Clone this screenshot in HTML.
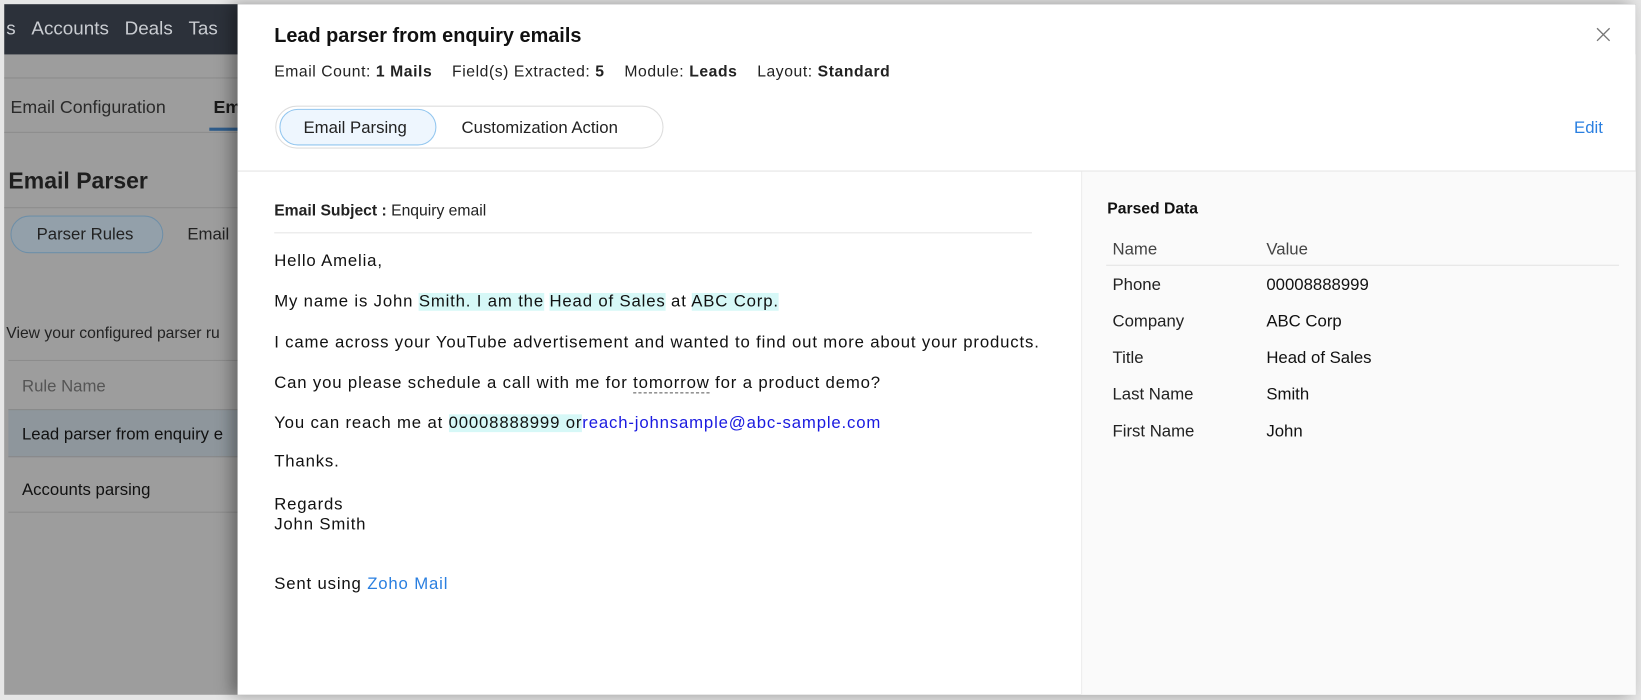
<!DOCTYPE html>
<html><head><meta charset="utf-8"><style>
*{margin:0;padding:0;box-sizing:border-box}
html,body{width:1641px;height:700px;overflow:hidden;background:#e6e6e6}
#w{position:absolute;left:0;top:0;width:1568px;height:669px;transform:scale(1.04656,1.04634);transform-origin:0 0;font-family:"Liberation Sans",sans-serif}
.a{position:absolute;white-space:nowrap}
#bg{position:absolute;left:4px;top:4px;width:1559px;height:660px;background:#9d9d9d;overflow:hidden}
#nav{position:absolute;left:0;top:0;width:100%;height:48px;background:#2c313a}
#panel{position:absolute;left:227px;top:4px;width:1336px;height:660px;background:#fff;box-shadow:-6px 0 14px rgba(0,0,0,.35)}
.l{position:absolute;height:1px;background:#8c8c8c}
.m{font-size:16px;letter-spacing:0.8px;color:#111}
.hl{background:#d6f8f7}
</style></head><body><div id="w">
<div id="bg">
 <div id="nav"></div>
 <div class="a" style="left:2px;top:13px;font-size:18px;color:#c9ccd1">s&nbsp;&nbsp;&nbsp;Accounts&nbsp;&nbsp;&nbsp;Deals&nbsp;&nbsp;&nbsp;Tas</div>
 <div class="l" style="left:0;top:70px;width:240px"></div>
 <div class="a" style="left:6px;top:89px;font-size:17px;color:#2a2a2a">Email Configuration</div>
 <div class="a" style="left:200px;top:89px;font-size:17px;color:#1a1a1a;font-weight:bold">Em</div>
 <div style="position:absolute;left:196px;top:118px;width:30px;height:3px;background:#2f5c8a"></div>
 <div class="l" style="left:0;top:122px;width:240px"></div>
 <div class="a" style="left:4px;top:156px;font-size:22px;font-weight:bold;color:#1e1e1e">Email Parser</div>
 <div class="l" style="left:0;top:194px;width:240px"></div>
 <div style="position:absolute;left:6px;top:202px;width:146px;height:36px;border:1px solid #6e8fa8;border-radius:18px;background:#93a0aa"></div>
 <div class="a" style="left:31px;top:212px;font-size:16px;color:#222">Parser Rules</div>
 <div class="a" style="left:175px;top:212px;font-size:16px;color:#222">Email</div>
 <div class="a" style="left:2px;top:306px;font-size:15px;color:#222">View your configured parser ru</div>
 <div class="l" style="left:4px;top:340px;width:240px"></div>
 <div class="a" style="left:17px;top:357px;font-size:16px;color:#555">Rule Name</div>
 <div style="position:absolute;left:4px;top:387px;width:240px;height:46px;background:#8e969c;border-top:1px solid #888;border-bottom:1px solid #888"></div>
 <div class="a" style="left:17px;top:403px;font-size:16px;color:#111">Lead parser from enquiry e</div>
 <div class="a" style="left:17px;top:456px;font-size:16px;color:#111">Accounts parsing</div>
 <div class="l" style="left:4px;top:485px;width:240px"></div>
</div>
<div id="panel">
 <div class="a" style="left:35px;top:20px;font-size:19px;font-weight:bold;color:#111">Lead parser from enquiry emails</div>
 <div class="a" style="left:35px;top:56px;font-size:15px;letter-spacing:0.55px;color:#222">Email Count: <b>1 Mails</b>&nbsp;&nbsp;&nbsp;&nbsp;Field(s) Extracted: <b>5</b>&nbsp;&nbsp;&nbsp;&nbsp;Module: <b>Leads</b>&nbsp;&nbsp;&nbsp;&nbsp;Layout: <b>Standard</b></div>
 <svg class="a" style="left:1298px;top:22px" width="14" height="14"><path d="M1 1L13 13M13 1L1 13" stroke="#777" stroke-width="1.3"/></svg>
 <div style="position:absolute;left:36px;top:97px;width:371px;height:41px;border:1px solid #ddd;border-radius:21px"></div>
 <div style="position:absolute;left:40px;top:100px;width:150px;height:35px;border:1px solid #92c6ef;border-radius:18px;background:#eef6fe"></div>
 <div class="a" style="left:63px;top:110px;font-size:16px;color:#222">Email Parsing</div>
 <div class="a" style="left:214px;top:110px;font-size:16px;color:#222">Customization Action</div>
 <div class="a" style="left:1277px;top:110px;font-size:16px;color:#2a7fe0">Edit</div>
 <div style="position:absolute;left:0;top:159px;width:1336px;height:1px;background:#e4e4e4"></div>
 <div style="position:absolute;left:806px;top:160px;width:530px;height:500px;background:#fafafa;border-left:1px solid #ececec"></div>
 <div class="a" style="left:35px;top:189px;font-size:15px;color:#222"><b>Email Subject :</b> Enquiry email</div>
 <div style="position:absolute;left:35px;top:218px;width:724px;height:1px;background:#e6e6e6"></div>
 <div class="a m" style="left:35px;top:237px">Hello Amelia,</div>
 <div class="a m" style="left:35px;top:276px">My name is John <span class="hl">Smith. I am the</span> <span class="hl">Head of Sales</span> at <span class="hl">ABC Corp.</span></div>
 <div class="a m" style="left:35px;top:315px">I came across your YouTube advertisement and wanted to find out more about your products.</div>
 <div class="a m" style="left:35px;top:354px">Can you please schedule a call with me for <span style="border-bottom:1px dashed #555">tomorrow</span> for a product demo?</div>
 <div class="a m" style="left:35px;top:392px">You can reach me at <span class="hl">00008888999 or</span><span style="color:#1a1ae0">reach-johnsample@abc-sample.com</span></div>
 <div class="a m" style="left:35px;top:429px">Thanks.</div>
 <div class="a m" style="left:35px;top:469px;line-height:19px;white-space:pre">Regards
John Smith</div>
 <div class="a m" style="left:35px;top:546px">Sent using <span style="color:#2a7fe0">Zoho Mail</span></div>
 <div class="a" style="left:831px;top:187px;font-size:15px;font-weight:bold;color:#111">Parsed Data</div>
 <div class="a" style="left:836px;top:226px;font-size:16px;color:#444">Name</div>
 <div class="a" style="left:983px;top:226px;font-size:16px;color:#444">Value</div>
 <div style="position:absolute;left:830px;top:249px;width:490px;height:1px;background:#e2e2e2"></div>
 <div class="a" style="left:836px;top:251px;font-size:16px;color:#222;line-height:35px">Phone<br>Company<br>Title<br>Last Name<br>First Name</div>
 <div class="a" style="left:983px;top:251px;font-size:16px;color:#111;line-height:35px">00008888999<br>ABC Corp<br>Head of Sales<br>Smith<br>John</div>
</div>
</div></body></html>
